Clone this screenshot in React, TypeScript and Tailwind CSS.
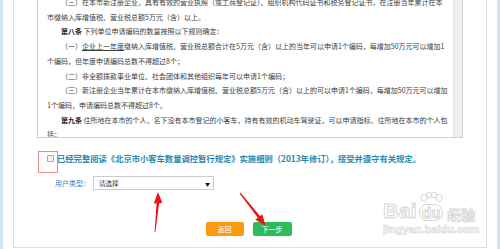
import React from 'react'

const cjk = "font-['Noto_Sans_CJK_SC','Noto_Sans',sans-serif]"

const lines: { indent?: boolean; node: React.ReactNode }[] = [
  { indent: true, node: '（三）在本市新注册企业，具有有效的营业执照（或工商登记证）、组织机构代码证书和税务登记证书，在注册当年累计在本' },
  { node: '市缴纳入库增值税、营业税总额5万元（含）以上。' },
  { indent: true, node: <><b className="text-[#222]">第八条</b> 下列单位申请编码的数量按照以下规则确定：</> },
  { indent: true, node: <>（一）<span className="underline">企业上一年度</span>缴纳入库增值税、营业税总额合计在5万元（含）以上的当年可以申请1个编码，每增加50万元可以增加1</> },
  { node: '个编码，但年度申请编码总数不得超过8个；' },
  { indent: true, node: '（二）非全额拨款事业单位、社会团体和其他组织每年可以申请1个编码；' },
  { indent: true, node: '（三）新注册企业当年累计在本市缴纳入库增值税、营业税总额5万元（含）以上的可以申请1个编码，每增加50万元可以增加' },
  { node: '1个编码，申请编码总数不得超过8个。' },
  { indent: true, node: <><b className="text-[#222]">第九条</b> 住所地在本市的个人，名下没有本市登记的小客车，持有有效的机动车驾驶证，可以申请指标。住所地在本市的个人包</> },
  { node: '括：' },
]

const Arrows = () => (
  <svg className="pointer-events-none absolute left-0 top-0" width="500" height="249" viewBox="0 0 500 249">
    <g fill="#e8141b">
      <polygon points="154.6,232 155.4,232 159.3,202 156.7,202" />
      <polygon points="158,192 153.8,203.5 162.4,203" />
      <polygon points="239.6,193.4 240.4,192.6 260.6,216.7 258.4,218.6" />
      <polygon points="265.5,225.5 255.3,219.8 262.3,214.3" />
    </g>
  </svg>
)

const Watermark = () => (
  <div className="pointer-events-none absolute left-[369px] top-[192px] flex flex-col items-start">
    <div className="relative flex items-end">
      <span className="font-['Liberation_Sans',sans-serif] text-[21px] font-bold leading-none tracking-[0.5px] text-white [-webkit-text-stroke:1px_#d6d6d6]">Bai</span>
      <div className="relative ml-[1px] flex flex-col items-center">
        <svg width="26" height="14" viewBox="0 0 26 14" className="mb-[-2px]">
          <g fill="#fff" stroke="#d6d6d6" strokeWidth="1">
            <ellipse cx="6" cy="6" rx="3" ry="3.6" />
            <ellipse cx="11" cy="3" rx="2.6" ry="3" />
            <ellipse cx="16" cy="3" rx="2.6" ry="3" />
            <ellipse cx="21" cy="6" rx="3" ry="3.6" />
          </g>
        </svg>
        <span className="rounded-[8px] border border-[#d6d6d6] bg-white px-[2px] font-['Liberation_Sans',sans-serif] text-[15px] font-bold leading-[15px] text-white [-webkit-text-stroke:1px_#d6d6d6]">du</span>
      </div>
      <span className={`${cjk} ml-[3px] text-[14px] font-bold leading-none text-white [-webkit-text-stroke:0.8px_#d6d6d6]`}>经验</span>
    </div>
    <span className="mt-[3px] font-['Liberation_Sans',sans-serif] text-[11px] font-bold leading-none text-white [-webkit-text-stroke:0.7px_#d9d9d9]">jingyan.baidu.com</span>
  </div>
)

export default function App() {
  return (
    <div className={`relative flex h-[249px] w-[500px] overflow-hidden bg-white ${cjk}`}>
      <div className="w-[3px] bg-[#cfe5f6]" />
      <div className="w-[10px]" />

      <div className="relative flex h-[248px] w-[474px] flex-col border-x border-b border-[#dddddd] px-[23px]">
        <div className="flex h-[138px] w-[426px] border-x border-b border-[#cfcfcf]">
          <div className="flex-1 overflow-hidden pl-[9px]">
            <div className="mt-[-5px] text-[7px] leading-[14.7px] text-[#3c3c3c]">
              {lines.map((l, i) => (
                <div key={i} className={l.indent ? 'whitespace-nowrap pl-[14px]' : 'whitespace-nowrap'}>{l.node}</div>
              ))}
            </div>
          </div>
          <div className="w-[9px] border-l border-[#e3e3e3] bg-[#efefef]" />
        </div>

        <div className="mt-[13px] flex h-[14px] items-center pl-[10px]">
          <span className="h-[7px] w-[7px] rounded-[1px] border border-[#a9a9a9] bg-[#f2f2f2]" />
          <span className="ml-[3px] whitespace-nowrap text-[8.3px] font-bold leading-none text-[#2a88ae]">
            已经完整阅读《北京市小客车数量调控暂行规定》实施细则（2013年修订），接受并遵守有关规定。
          </span>
        </div>

        <div className="mt-[11px] flex h-[14px] items-center pl-[18px]">
          <span className="w-[38px] text-[7px] leading-none text-[#3b82c4]">用户类型：</span>
          <div className="flex h-[14px] w-[121px] items-center justify-between border border-[#cdcdcd] bg-white pl-[5px] pr-[3px]">
            <span className="text-[6.5px] leading-none text-[#333]">请选择</span>
            <span className="text-[5px] leading-none text-[#111]">▼</span>
          </div>
        </div>

        <div className="mt-[32px] flex justify-center gap-[9px] pr-[3px]">
          <button className="flex h-[14px] w-[38px] items-center justify-center rounded-[2px] bg-[#fb9a10] text-[7px] leading-none text-white">返回</button>
          <button className="flex h-[14px] w-[39px] items-center justify-center rounded-[2px] bg-[#2cbd5a] text-[7px] leading-none text-white">下一步</button>
        </div>

        <div className="pointer-events-none absolute left-[24px] top-[151px] h-[22px] w-[20px] border border-[#f08a8a]" />
        <Watermark />
      </div>

      <div className="flex-1" />
      <div className="w-[3px] bg-[#cfe5f6]" />
      <Arrows />
    </div>
  )
}
